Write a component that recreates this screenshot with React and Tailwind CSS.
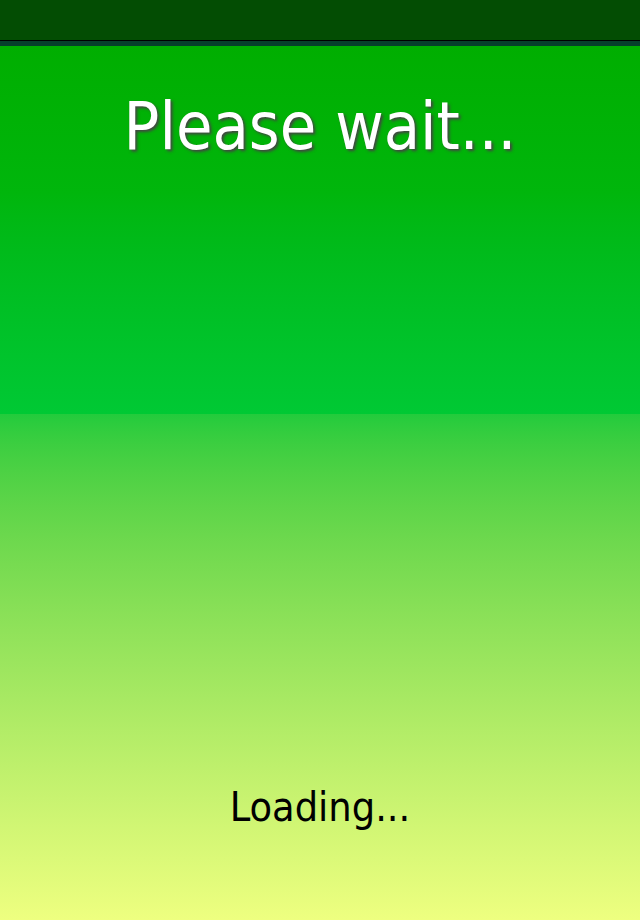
export default function App() {
  return (
    <div className="w-[640px] h-[920px] flex flex-col overflow-hidden" style={{ fontFamily: '"DejaVu Sans Condensed", "DejaVu Sans", Verdana, sans-serif' }}>
      <div className="h-[40px] bg-[#034d03]" />
      <div className="h-[1px] bg-black" />
      <div className="h-[5px] bg-[#063f2c]" />
      <div className="h-[368px] bg-gradient-to-b from-[#00ae00] via-[#00b60c] via-40% to-[#00c934] flex justify-center pt-[42px]">
        <div className="text-white text-[66px] leading-[78px] [font-stretch:condensed] [text-shadow:2px_2px_3px_#444]">Please wait...</div>
      </div>
      <div className="flex-1 bg-gradient-to-b from-[#22cb3c] to-[#eeff80] flex flex-col justify-end items-center pb-[89px]">
        <div className="text-black text-[41px] leading-[48px] [font-stretch:condensed]">Loading...</div>
      </div>
    </div>
  );
}
